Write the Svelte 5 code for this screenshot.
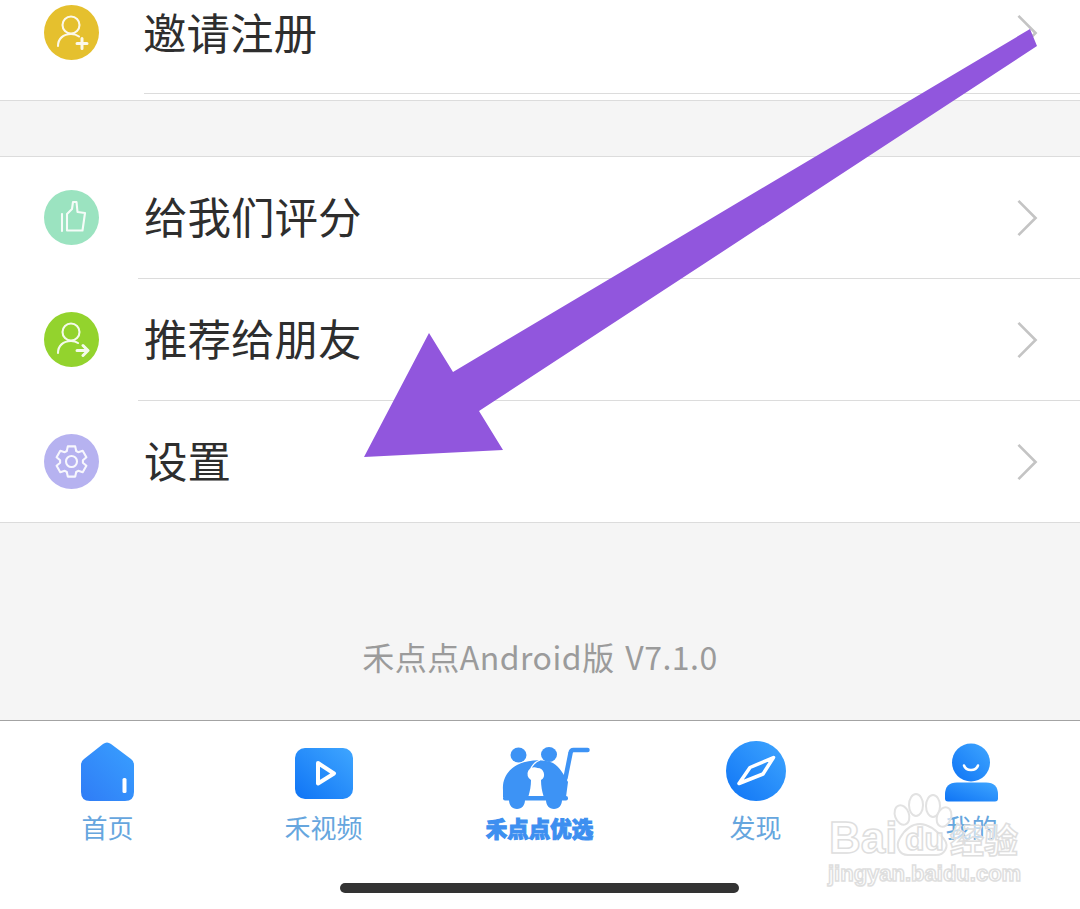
<script>
  const rows = [
    { icon: "thumb", label: "给我们评分", bg: "#9be3c0" },
    { icon: "share", label: "推荐给朋友", bg: "#93d32d" },
    { icon: "gear", label: "设置", bg: "#b6b2f0" },
  ];

  // six tooth gear outline, centred on the badge
  function gearPath(cx, cy, outer, inner) {
    const pts = [];
    for (let i = 0; i < 6; i++) {
      const a = (i * Math.PI) / 3 - Math.PI / 2;
      for (const [off, r] of [
        [-0.42, inner],
        [-0.24, outer],
        [0.24, outer],
        [0.42, inner],
      ]) {
        pts.push(
          `${(cx + Math.cos(a + off) * r).toFixed(1)} ${(cy + Math.sin(a + off) * r).toFixed(1)}`,
        );
      }
    }
    return "M" + pts.join("L") + "Z";
  }
</script>

<div class="screen">
  <section class="invite">
    <div class="row short">
      <svg class="badge" viewBox="0 0 55 55">
        <circle cx="27.5" cy="27.5" r="27.5" fill="#e5c02e" />
        <g class="line">
          <circle cx="27" cy="20" r="8.5" />
          <path d="M14 41c0-7 5-12 13-12 3 0 6 1 8 2.500" />
          <path class="thick" d="M38 33.500v10M33 38.500h10" />
        </g>
      </svg>
      <div class="row-body inset">
        <span class="label">邀请注册</span>
        <svg class="chevron" viewBox="0 0 24 40"><path d="M3 2l18 18L3 38" /></svg>
      </div>
    </div>
  </section>

  <section class="group">
    {#each rows as row}
      <div class="row">
        <svg class="badge" viewBox="0 0 55 55">
          <circle cx="27.5" cy="27.5" r="27.5" fill={row.bg} />
          <g class="line">
            {#if row.icon === "thumb"}
              <path d="M18 24v17" />
              <path d="M23 40.500V24l5-5 1-7h3.500l1 10 7.500 1-2.500 17.500z" />
            {:else if row.icon === "share"}
              <circle cx="27" cy="20" r="8.500" />
              <path d="M14 41c0-7 5-12 13-12 3 0 5 .5 7 2" />
              <path class="thick" d="M33 38.500h10M39 33.500l5 5-5 5" />
            {:else}
              <path d={gearPath(27.5, 27.5, 15.5, 11.5)} />
              <circle cx="27.5" cy="27.5" r="5.500" />
            {/if}
          </g>
        </svg>
        <div class="row-body">
          <span class="label">{row.label}</span>
          <svg class="chevron" viewBox="0 0 24 40"><path d="M3 2l18 18L3 38" /></svg>
        </div>
      </div>
    {/each}
  </section>

  <div class="version">禾点点Android版 V7.1.0</div>

  <nav class="tabbar">
    <div class="tabs">
      <div class="tab">
        <svg class="tab-icon" viewBox="70 740 76 64">
          <defs>
            <linearGradient id="g-home" x1="1" y1="0" x2="0" y2="1">
              <stop offset="0" stop-color="#39a0ff" />
              <stop offset="1" stop-color="#2f7cf6" />
            </linearGradient>
          </defs>
          <path
            d="M103 744q4-3 8 0l20 15q3 2 3 6v27q0 9-9 9H90q-9 0-9-9v-27q0-4 3-6z"
            fill="url(#g-home)"
          />
          <rect x="122.500" y="778" width="4" height="15" rx="1.500" fill="#fff" />
        </svg>
        <span>首页</span>
      </div>
      <div class="tab">
        <svg class="tab-icon" viewBox="286 740 76 64">
          <defs>
            <linearGradient id="g-video" x1="1" y1="0" x2="0" y2="1">
              <stop offset="0" stop-color="#3fa6ff" />
              <stop offset="1" stop-color="#0f74f5" />
            </linearGradient>
          </defs>
          <rect x="295" y="748" width="58" height="51" rx="10" fill="url(#g-video)" />
          <path
            d="M318 763l16 10.500-16 10z"
            fill="none"
            stroke="#fff"
            stroke-width="4"
            stroke-linejoin="round"
          />
        </svg>
        <span>禾视频</span>
      </div>
      <div class="tab promo">
        <svg class="tab-icon" viewBox="490 740 100 64">
          <g fill="#3d93f5">
            <ellipse cx="518.500" cy="755" rx="8" ry="7.500" />
            <ellipse cx="549" cy="754.500" rx="8" ry="7.500" />
            <path d="M503 790c-1-12 6-21 14-25 12-6 27-6 36-2 7 4 11 12 15 19l-2 15H503z" />
            <rect x="503" y="796" width="65" height="4.500" rx="2" />
            <path d="M509 800h16c0 5-3 9-8 9s-8-4-8-9zM546 800h16c0 5-3 9-8 9s-8-4-8-9z" />
          </g>
          <path
            d="M565.500 778l5-25q.5-3 3-3h14"
            fill="none"
            stroke="#3d93f5"
            stroke-width="4.500"
            stroke-linecap="round"
          />
          <path
            d="M540 760c-7 3-11 9-10 17"
            fill="none"
            stroke="#fff"
            stroke-width="1.200"
          />
          <path
            d="M537.500 768a6.500 6.500 0 0 1 3.500 12c0 6 1 11 2.500 16h-15c1.500-5 2.500-10 2.500-16a6.500 6.500 0 0 1 6.500-12z"
            fill="#fff"
          />
        </svg>
        <span>禾点点优选</span>
      </div>
      <div class="tab">
        <svg class="tab-icon" viewBox="718 740 76 64">
          <defs>
            <linearGradient id="g-compass" x1="1" y1="0" x2="0" y2="1">
              <stop offset="0" stop-color="#3fa6ff" />
              <stop offset="1" stop-color="#0f74f5" />
            </linearGradient>
          </defs>
          <circle cx="756" cy="771" r="30" fill="url(#g-compass)" />
          <path
            d="M773.500 757.500L750 767.500l-11 16 24-9.500z"
            fill="none"
            stroke="#fff"
            stroke-width="3.500"
            stroke-linejoin="round"
          />
        </svg>
        <span>发现</span>
      </div>
      <div class="tab">
        <svg class="tab-icon" viewBox="934 740 76 64">
          <defs>
            <linearGradient id="g-me" x1="1" y1="0" x2="0" y2="1">
              <stop offset="0" stop-color="#3fa6ff" />
              <stop offset="1" stop-color="#0f74f5" />
            </linearGradient>
          </defs>
          <circle cx="971" cy="762.500" r="19" fill="url(#g-me)" />
          <path
            d="M964 765.500c2 6 12 6 14 0"
            fill="none"
            stroke="#fff"
            stroke-width="2.500"
            stroke-linecap="round"
          />
          <path
            d="M957 782.500h29q12 0 12 12v4q0 3-3 3h-47q-3 0-3-3v-4q0-12 12-12z"
            fill="url(#g-me)"
          />
        </svg>
        <span>我的</span>
      </div>
    </div>
    <div class="home-bar"></div>
  </nav>

  <svg class="arrow" viewBox="0 0 1080 909">
    <path d="M1030 29l7 17-558 365 24 39-139 7 65-124 24 39z" fill="#9156dd" />
  </svg>

  <svg class="watermark" viewBox="0 0 1080 909">
    <g class="paw">
      <ellipse cx="902" cy="815" rx="7" ry="10" transform="rotate(-20 902 815)" />
      <ellipse cx="916" cy="805" rx="7" ry="11" />
      <ellipse cx="933" cy="806" rx="7" ry="11" />
      <ellipse cx="944" cy="817" rx="7" ry="10" transform="rotate(20 944 817)" />
      <path d="M900 838c4-7 10-14 20-14s18 8 24 15c6 8 0 16-8 16h-28c-9 0-13-9-8-17z" />
    </g>
    <text class="wm-logo" x="829" y="853">Bai</text>
    <text class="wm-du" x="905" y="850">du</text>
    <text class="wm-cn" x="950" y="853">经验</text>
    <text class="wm-url" x="828" y="881">jingyan.baidu.com</text>
  </svg>
</div>

<style>
  :global(body) {
    background: #f5f5f5;
  }

  .screen {
    position: relative;
    display: flex;
    flex-direction: column;
    width: 1080px;
    height: 909px;
    overflow: hidden;
    background: #f5f5f5;
    font-family: "Noto Sans CJK SC", "Noto Sans", sans-serif;
  }

  .invite {
    height: 100px;
    background: #fff;
    border-bottom: 1px solid #dcdcdc;
  }

  .group {
    margin-top: 55px;
    background: #fff;
    border-top: 1px solid #dcdcdc;
    border-bottom: 1px solid #dcdcdc;
  }

  .row {
    display: flex;
    align-items: center;
    height: 122px;
    padding-left: 44px;
  }

  .row.short {
    height: 94px;
    align-items: flex-start;
  }

  .group .row:last-child {
    height: 121px;
  }

  .group .row:last-child .row-body {
    border-bottom: 0;
  }

  .badge {
    flex: none;
    width: 55px;
    height: 55px;
    margin-top: -1px;
  }

  .short .badge {
    margin-top: 5px;
  }

  .line {
    fill: none;
    stroke: #fff;
    stroke-width: 2.1;
    stroke-linecap: round;
    stroke-linejoin: round;
    opacity: 0.9;
  }

  .line .thick {
    stroke-width: 3;
  }

  .row-body {
    flex: 1;
    display: flex;
    align-items: center;
    justify-content: space-between;
    align-self: stretch;
    margin-left: 39px;
    padding: 0 41px 0 7px;
    border-bottom: 1px solid #dcdcdc;
  }

  .row-body.inset {
    margin-left: 45px;
    padding-left: 0;
    padding-bottom: 27px;
  }

  .row-body .label {
    margin-top: -3px;
    margin-left: -1px;
  }

  .label {
    font-size: 43.500px;
    line-height: 50px;
    color: #2e2e2e;
  }

  .chevron {
    width: 24px;
    height: 38px;
    fill: none;
    stroke: #c4c4c4;
    stroke-width: 2.8;
  }

  .version {
    flex: 1;
    padding-top: 110px;
    text-align: center;
    font-size: 32px;
    line-height: 46px;
    letter-spacing: 0.5px;
    word-spacing: 3px;
    color: #9b9b9b;
  }

  .tabbar {
    height: 188px;
    background: #fff;
    border-top: 1px solid #a3a3a3;
  }

  .tabs {
    display: grid;
    grid-template-columns: repeat(5, 216px);
    padding-top: 19px;
  }

  .tab {
    display: flex;
    flex-direction: column;
    align-items: center;
    font-size: 26px;
    line-height: 36px;
    color: #66a6de;
  }

  .tab span {
    margin-top: 5px;
    margin-right: 1px;
  }

  .tab-icon {
    width: 76px;
    height: 64px;
    overflow: visible;
  }

  .promo .tab-icon {
    width: 100px;
  }

  .promo span {
    margin-top: 6px;
    font-size: 21.500px;
    font-weight: 900;
    color: #3d8ff0;
    -webkit-text-stroke: 1px #3d8ff0;
  }

  .home-bar {
    width: 399px;
    height: 10px;
    margin: 37px auto 0;
    transform: translateX(-1px);
    border-radius: 5px;
    background: #333;
  }

  .arrow,
  .watermark {
    position: absolute;
    inset: 0;
    width: 1080px;
    height: 909px;
    pointer-events: none;
  }

  .paw {
    fill: rgba(255, 255, 255, 0.6);
    stroke: #e2e2e2;
    stroke-width: 2;
  }

  .watermark text {
    fill: rgba(255, 255, 255, 0.6);
    stroke: #dedede;
    stroke-width: 1.500;
    font-weight: 700;
  }

  .wm-logo {
    font-family: "Liberation Sans", sans-serif;
    font-size: 44px;
  }

  .wm-du {
    font-family: "Liberation Sans", sans-serif;
    font-size: 32px;
  }

  .wm-cn {
    font-family: "Noto Sans CJK SC", sans-serif;
    font-size: 34px;
  }

  .wm-url {
    font-family: "Liberation Sans", sans-serif;
    font-size: 22px;
  }
</style>
